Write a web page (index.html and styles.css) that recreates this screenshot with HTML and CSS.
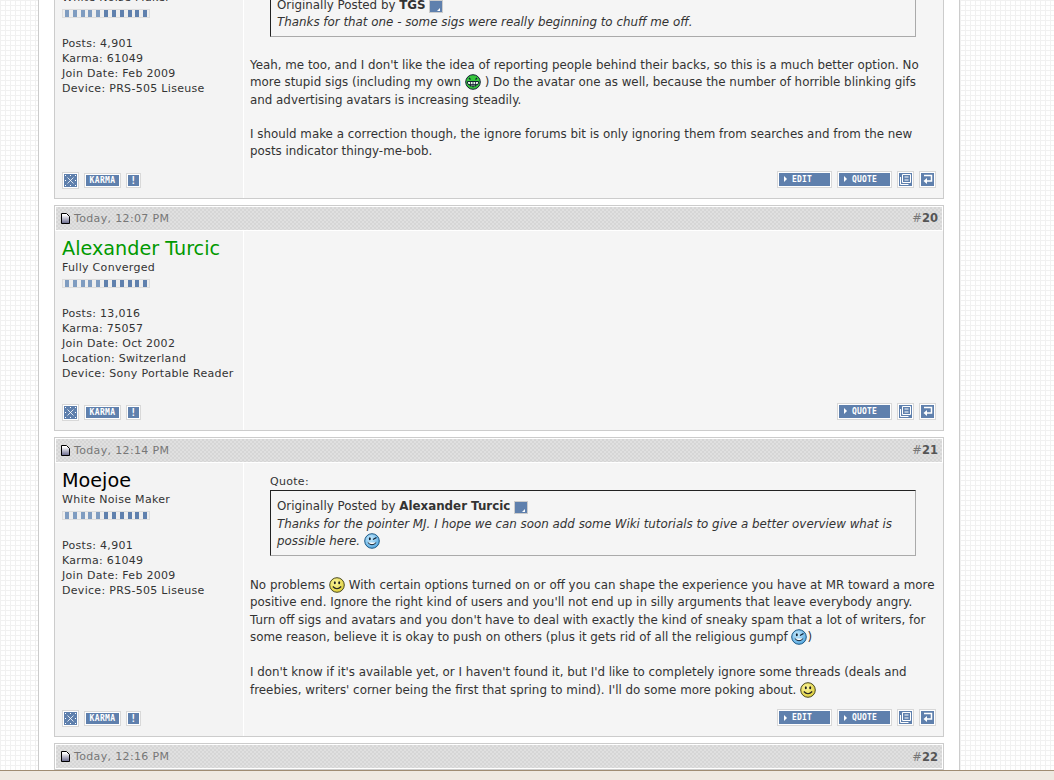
FILE: index.html
```html
<!DOCTYPE html>
<html lang="en">
<head>
    <meta charset="UTF-8">
    <title>Thread - Page 2</title>
    <link rel="stylesheet" href="styles.css">
</head>
<body>
    <svg class="defs" width="0" height="0">
        <defs>
            <linearGradient id="doc-fill" x1="0" y1="0" x2="0" y2="1">
                <stop offset="0.15" stop-color="#fff"/>
                <stop offset="1" stop-color="#66668a"/>
            </linearGradient>
            <radialGradient id="smile-fill" cx="0.4" cy="0.35" r="0.7">
                <stop offset="0" stop-color="#fdf8a0"/>
                <stop offset="1" stop-color="#dccb35"/>
            </radialGradient>
            <radialGradient id="wink-fill" cx="0.4" cy="0.35" r="0.7">
                <stop offset="0" stop-color="#c9ecff"/>
                <stop offset="1" stop-color="#4ea5e0"/>
            </radialGradient>
        </defs>
        <symbol id="i-smile" viewBox="0 0 16 16">
            <circle cx="8" cy="8" r="7.3" fill="url(#smile-fill)" stroke="#4a4a20"/>
            <ellipse cx="5.8" cy="5.8" rx="1" ry="1.5" fill="#222"/>
            <ellipse cx="10.2" cy="5.8" rx="1" ry="1.5" fill="#222"/>
            <path d="M3.8 9.5q4.200 4.500 8.400 0" fill="none" stroke="#222" stroke-width="1.2"/>
        </symbol>
        <symbol id="i-wink" viewBox="0 0 16 16">
            <circle cx="8" cy="8" r="7.3" fill="url(#wink-fill)" stroke="#1d5a86"/>
            <ellipse cx="5.8" cy="5.8" rx="1" ry="1.5" fill="#123"/>
            <path d="M9 6.5l3.500-2" fill="none" stroke="#123" stroke-width="1.2"/>
            <path d="M3.8 9.5q4.200 4.500 8.400 0" fill="#fff" stroke="#123"/>
        </symbol>
        <symbol id="i-grin" viewBox="0 0 16 16">
            <circle cx="8" cy="8" r="7.3" fill="#35c83c" stroke="#123"/>
            <path d="M4 4l1.500 1.500M12 4l-1.500 1.500" stroke="#123" stroke-width="1.2"/>
            <path d="M2.5 7.5h11v2q-5.500 5.500-11 0z" fill="#e8f5e8" stroke="#123"/>
            <path d="M5.5 7.5v5M8 7.5v6M10.5 7.5v5M3 10.5h10" stroke="#123" stroke-width=".8"/>
        </symbol>
        <symbol id="i-doc" viewBox="0 0 9 11">
            <path d="M.5.5h5l3 3v7h-8z" fill="url(#doc-fill)" stroke="#000"/>
        </symbol>
        <symbol id="i-x" viewBox="0 0 13 13">
            <path d="M3.5 3.5l6 6M9.500 3.500l-6 6" stroke="#fff" stroke-width=".8"/>
            <path d="M1 1h1v1H1zM6 1h1v1H6zM11 1h1v1h-1zM1 6h1v1H1zM11 6h1v1h-1zM1 11h1v1H1zM6 11h1v1H6zM11 11h1v1h-1z" fill="#fff"/>
        </symbol>
        <symbol id="i-multi" viewBox="0 0 13 13">
            <path d="M3.5 1.500h8v8h-8zM1.500 4v7.500h8" fill="none" stroke="#fff"/>
            <path d="M5.5 4h4M5.5 7h4" stroke="#fff"/>
        </symbol>
        <symbol id="i-reply" viewBox="0 0 13 13">
            <path d="M3 2.500h7.500v5.500H5" fill="none" stroke="#fff" stroke-width="1.5"/>
            <path d="M6 5v6L2.500 8z" fill="#fff"/>
        </symbol>
        <symbol id="i-view" viewBox="0 0 12 11">
            <rect width="12" height="11" fill="#5f80ad"/>
            <path d="M10 7v3H7z" fill="#fff"/>
        </symbol>
    </svg>

    <div class="page">
        <div class="posts">

            <div class="post tight">
                <div class="post-head">
                    <span class="when"><svg width="9" height="11"><use href="#i-doc"/></svg>Today, 12:02 PM</span>
                    <span class="num">#<b>19</b></span>
                </div>
                <div class="post-body">
                    <div class="user">
                        <div class="name">Moejoe</div>
                        <div class="user-title">White Noise Maker</div>
                        <div class="rep"><i></i><i></i><i></i><i></i><i></i><i></i><i></i><i></i><i></i><i></i><i></i></div>
                        <div class="stats">Posts: 4,901<br>Karma: 61049<br>Join Date: Feb 2009<br>Device: PRS-505 Liseuse</div>
                        <div class="user-btns">
                            <span class="btn square"><svg width="13" height="13"><use href="#i-x"/></svg></span>
                            <span class="btn karma">KARMA</span>
                            <span class="btn alert">!</span>
                        </div>
                    </div>
                    <div class="content">
                        <div class="message">
                            <div class="quote-label">Quote:</div>
                            <div class="quote">
                                <div>Originally Posted by <b>TGS</b> <span class="view"><svg width="12" height="11"><use href="#i-view"/></svg></span></div>
                                <div class="quote-text">Thanks for that one - some sigs were really beginning to chuff me off.</div>
                            </div>
                            <p>Yeah, me too, and I don't like the idea of reporting people behind their backs, so this is a much better option. No more stupid sigs (including my own <svg class="smiley"><use href="#i-grin"/></svg> ) Do the avatar one as well, because the number of horrible blinking gifs and advertising avatars is increasing steadily.</p>
                            <p>I should make a correction though, the ignore forums bit is only ignoring them from searches and from the new posts indicator thingy-me-bob.</p>
                        </div>
                        <div class="post-btns">
                            <span class="btn wide"><em></em>EDIT</span>
                            <span class="btn wide"><em></em>QUOTE</span>
                            <span class="btn square"><svg width="13" height="13"><use href="#i-multi"/></svg></span>
                            <span class="btn square"><svg width="13" height="13"><use href="#i-reply"/></svg></span>
                        </div>
                    </div>
                </div>
            </div>

            <div class="post">
                <div class="post-head">
                    <span class="when"><svg width="9" height="11"><use href="#i-doc"/></svg>Today, 12:07 PM</span>
                    <span class="num">#<b>20</b></span>
                </div>
                <div class="post-body">
                    <div class="user">
                        <div class="name green">Alexander Turcic</div>
                        <div class="user-title">Fully Converged</div>
                        <div class="rep"><i></i><i></i><i></i><i></i><i></i><i></i><i></i><i></i><i></i><i></i><i></i></div>
                        <div class="stats">Posts: 13,016<br>Karma: 75057<br>Join Date: Oct 2002<br>Location: Switzerland<br>Device: Sony Portable Reader</div>
                        <div class="user-btns">
                            <span class="btn square"><svg width="13" height="13"><use href="#i-x"/></svg></span>
                            <span class="btn karma">KARMA</span>
                            <span class="btn alert">!</span>
                        </div>
                    </div>
                    <div class="content">
                        <div class="message"></div>
                        <div class="post-btns">
                            <span class="btn wide"><em></em>QUOTE</span>
                            <span class="btn square"><svg width="13" height="13"><use href="#i-multi"/></svg></span>
                            <span class="btn square"><svg width="13" height="13"><use href="#i-reply"/></svg></span>
                        </div>
                    </div>
                </div>
            </div>

            <div class="post">
                <div class="post-head">
                    <span class="when"><svg width="9" height="11"><use href="#i-doc"/></svg>Today, 12:14 PM</span>
                    <span class="num">#<b>21</b></span>
                </div>
                <div class="post-body">
                    <div class="user">
                        <div class="name">Moejoe</div>
                        <div class="user-title">White Noise Maker</div>
                        <div class="rep"><i></i><i></i><i></i><i></i><i></i><i></i><i></i><i></i><i></i><i></i><i></i></div>
                        <div class="stats">Posts: 4,901<br>Karma: 61049<br>Join Date: Feb 2009<br>Device: PRS-505 Liseuse</div>
                        <div class="user-btns">
                            <span class="btn square"><svg width="13" height="13"><use href="#i-x"/></svg></span>
                            <span class="btn karma">KARMA</span>
                            <span class="btn alert">!</span>
                        </div>
                    </div>
                    <div class="content">
                        <div class="message">
                            <div class="quote-label">Quote:</div>
                            <div class="quote">
                                <div>Originally Posted by <b>Alexander Turcic</b> <span class="view"><svg width="12" height="11"><use href="#i-view"/></svg></span></div>
                                <div class="quote-text">Thanks for the pointer MJ. I hope we can soon add some Wiki tutorials to give a better overview what is possible here. <svg class="smiley"><use href="#i-wink"/></svg></div>
                            </div>
                            <p>No problems <svg class="smiley"><use href="#i-smile"/></svg> With certain options turned on or off you can shape the experience you have at MR toward a more positive end. Ignore the right kind of users and you'll not end up in silly arguments that leave everybody angry. Turn off sigs and avatars and you don't have to deal with exactly the kind of sneaky spam that a lot of writers, for some reason, believe it is okay to push on others (plus it gets rid of all the religious gumpf <svg class="smiley"><use href="#i-wink"/></svg>)</p>
                            <p>I don't know if it's available yet, or I haven't found it, but I'd like to completely ignore some threads (deals and freebies, writers' corner being the first that spring to mind). I'll do some more poking about. <svg class="smiley"><use href="#i-smile"/></svg></p>
                        </div>
                        <div class="post-btns">
                            <span class="btn wide"><em></em>EDIT</span>
                            <span class="btn wide"><em></em>QUOTE</span>
                            <span class="btn square"><svg width="13" height="13"><use href="#i-multi"/></svg></span>
                            <span class="btn square"><svg width="13" height="13"><use href="#i-reply"/></svg></span>
                        </div>
                    </div>
                </div>
            </div>

            <div class="post">
                <div class="post-head">
                    <span class="when"><svg width="9" height="11"><use href="#i-doc"/></svg>Today, 12:16 PM</span>
                    <span class="num">#<b>22</b></span>
                </div>
            </div>

        </div>
    </div>

    <div class="bottom-bar"></div>
</body>
</html>
```

FILE: styles.css
```css
html, body {
    height: 100%;
    overflow: hidden;
}
body {
    margin: 0;
    font-family: "DejaVu Sans", sans-serif;
    font-size: 11.87px;
    color: #333;
    background-color: #fff;
    background-image:
        linear-gradient(#f1f1f1 1px, transparent 1px),
        linear-gradient(90deg, #f1f1f1 1px, transparent 1px);
    background-size: 5px 5px;
}
.defs {
    display: block;
    height: 0;
}
.page {
    width: 922px;
    height: 100%;
    overflow: hidden;
    margin-left: 38px;
    padding: 0 15px;
    box-sizing: border-box;
    background: #fff;
    border-left: 1px solid #ccc;
    border-right: 1px solid #ccc;
}
.posts {
    margin-top: -65px;
    display: flex;
    flex-direction: column;
    gap: 6px;
}
.post {
    border: 1px solid #ccc;
    background: #f5f5f5;
}
.post-head {
    display: flex;
    justify-content: space-between;
    align-items: center;
    height: 25px;
    box-sizing: border-box;
    padding: 0 4px 0 5px;
    border: 1px solid #fff;
    color: #777;
    font-size: 11px;
    letter-spacing: .35px;
    background-color: #e0e0e0;
    background-image:
        linear-gradient(45deg, #d6d6d6 25%, transparent 25%, transparent 75%, #d6d6d6 75%),
        linear-gradient(45deg, #d6d6d6 25%, transparent 25%, transparent 75%, #d6d6d6 75%);
    background-size: 4px 4px;
    background-position: 0 0, 2px 2px;
}
.when svg {
    margin-right: 4px;
    vertical-align: -2px;
}
.num {
    font-size: 11.5px;
    letter-spacing: 0;
}
.num b {
    color: #555;
}
.post-body {
    display: flex;
}
.user {
    width: 189px;
    flex: none;
    box-sizing: border-box;
    padding: 6px 6px 9px 7px;
    border-right: 1px solid #fff;
    background: #f3f3f3;
    display: flex;
    flex-direction: column;
    font-size: 11px;
    letter-spacing: .3px;
    line-height: 15px;
}
.name {
    font-size: 19.2px;
    letter-spacing: 0;
    line-height: 23px;
    color: #000;
}
.name.green {
    color: #090;
}
.rep {
    display: flex;
    width: 88px;
    height: 9px;
    box-sizing: border-box;
    margin-top: 4px;
    border: 1px solid #ddd;
    background: #eee;
}
.rep i {
    flex: 1;
    background: linear-gradient(90deg, transparent 2px, #7f9cc0 2px, #7f9cc0 6px, transparent 6px);
}
.rep i:nth-child(n+6) {
    background: linear-gradient(90deg, transparent 2px, #5f80ad 2px, #5f80ad 6px, transparent 6px);
}
.stats {
    margin: 18px 0 23px;
    white-space: nowrap;
}
.user-btns {
    margin-top: auto;
    display: flex;
    align-items: center;
    gap: 5px;
}
.btn {
    display: inline-flex;
    align-items: center;
    justify-content: center;
    box-sizing: border-box;
    height: 17px;
    background: #5f80ad;
    border: 1px solid #d8d8d8;
    box-shadow: inset 0 0 0 1px #fff;
    color: #fff;
    font-family: "DejaVu Sans Mono", monospace;
    font-size: 8px;
    font-weight: bold;
}
.btn.square {
    width: 17px;
}
.btn.karma {
    width: 37px;
    height: 15px;
    letter-spacing: .4px;
}
.btn.alert {
    width: 15px;
    height: 15px;
    font-size: 10px;
}
.btn.wide {
    width: 55px;
    justify-content: flex-start;
    padding-left: 6px;
    letter-spacing: .2px;
}
.btn.wide em {
    width: 0;
    height: 0;
    margin-right: 5px;
    border-left: 3px solid #fff;
    border-top: 3px solid transparent;
    border-bottom: 3px solid transparent;
}
.content {
    flex: 1;
    display: flex;
    flex-direction: column;
    padding: 6px 5px 10px 6px;
    min-width: 0;
}
.message {
    flex: 1;
    margin-bottom: 10px;
    line-height: 17.5px;
}
.message p {
    margin: 17.5px 0 0;
}
.quote-label {
    margin: 4px 0 0 20px;
    font-size: 11px;
    letter-spacing: .3px;
}
.quote {
    margin: 0 22px 0 20px;
    padding: 7px 6px 4px;
    border: 1px solid #aaa;
    border-top-color: #222;
    border-left-color: #222;
}
.quote-text {
    font-style: italic;
}
.message .quote + p {
    margin-top: 21px;
}
.tight .message p {
    margin-top: 16.5px;
}
.tight .message .quote + p {
    margin-top: 20px;
}
.view {
    display: inline-block;
    border: 1px solid #ccc;
    line-height: 0;
    vertical-align: -3px;
}
.smiley {
    width: 16px;
    height: 16px;
    vertical-align: -4px;
}
.post-btns {
    display: flex;
    justify-content: flex-end;
    gap: 5px;
    margin-right: 2px;
}
.bottom-bar {
    position: fixed;
    left: 0;
    right: 0;
    bottom: 0;
    height: 10px;
    background: #efe9e1;
    border-top: 1px solid #a08c72;
    box-sizing: border-box;
}
```
